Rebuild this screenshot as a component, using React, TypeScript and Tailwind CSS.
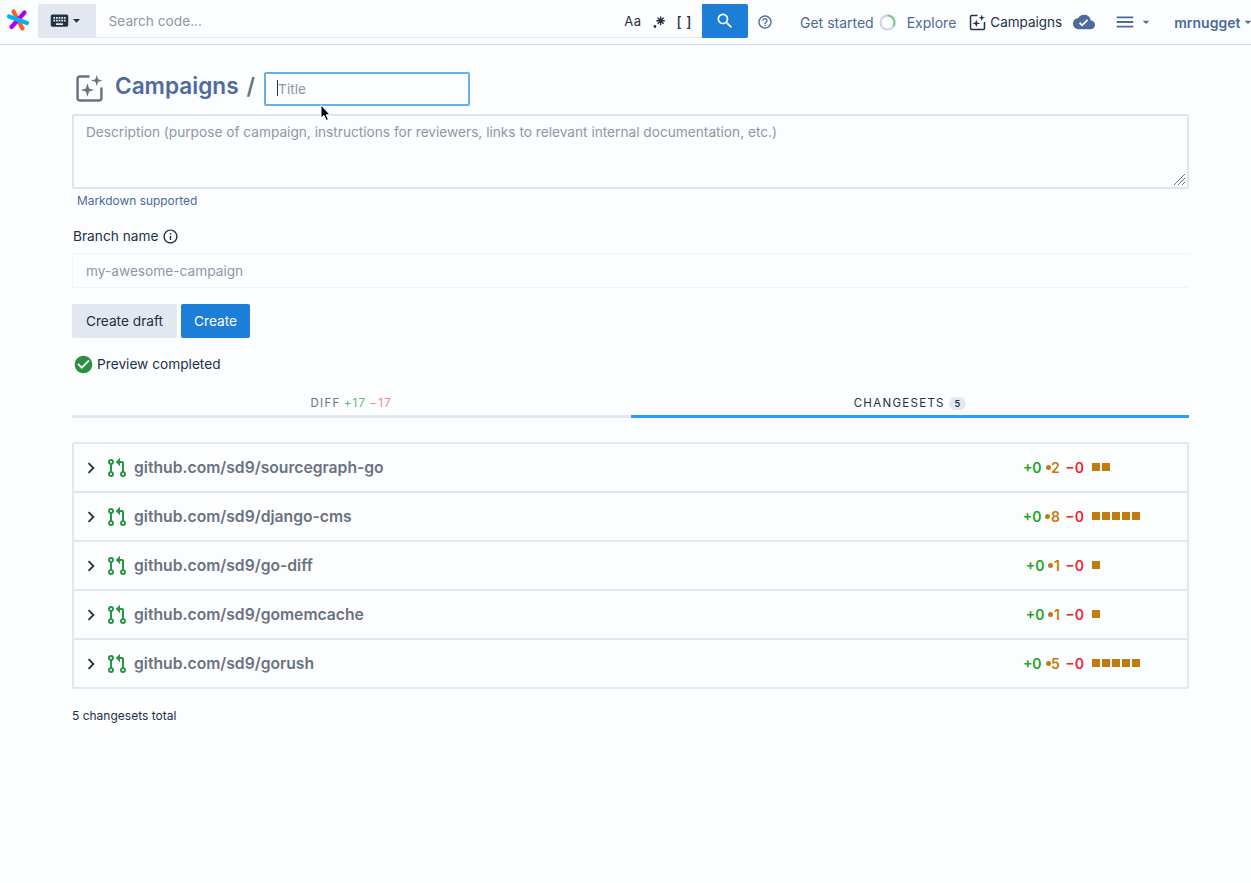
import React from 'react';
import { MdKeyboard, MdSearch, MdHelpOutline, MdCloudDone, MdMenu, MdArrowDropDown, MdCheckCircle, MdChevronRight, MdInfoOutline } from 'react-icons/md';

const changesets = [
  { name: 'github.com/sd9/sourcegraph-go', changed: 2, boxes: 2 },
  { name: 'github.com/sd9/django-cms', changed: 8, boxes: 5 },
  { name: 'github.com/sd9/go-diff', changed: 1, boxes: 1 },
  { name: 'github.com/sd9/gomemcache', changed: 1, boxes: 1 },
  { name: 'github.com/sd9/gorush', changed: 5, boxes: 5 },
];

const Logo = () => (
  <svg width="24" height="24" viewBox="0 0 24 24" fill="none" strokeLinecap="round" strokeWidth="4.2">
    <path d="M7.5 3.5 L16.5 20.5" stroke="#ff5c28" />
    <path d="M18.5 4.5 L5.5 19" stroke="#b200f8" />
    <path d="M3 8.5 L21 15" stroke="#00b4f2" />
  </svg>
);

const CampaignIcon = ({ size, color }: { size: number; color: string }) => (
  <svg width={size} height={size} viewBox="0 0 28 28" fill="none">
    <path d="M14 2.5 H4.5 A2 2 0 0 0 2.5 4.5 V23.5 A2 2 0 0 0 4.5 25.5 H23.5 A2 2 0 0 0 25.5 23.5 V13" stroke={color} strokeWidth="2.4" />
    <path d="M12 9 L13.6 14 L18.5 15.5 L13.6 17 L12 22 L10.4 17 L5.5 15.5 L10.4 14 Z" fill={color} />
    <path d="M21 1 L22.3 5 L26.5 6.3 L22.3 7.6 L21 11.5 L19.7 7.6 L15.5 6.3 L19.7 5 Z" fill={color} />
  </svg>
);

const PullIcon = () => (
  <svg width="24" height="24" viewBox="0 0 24 24" fill="#2a9444">
    <path d="M6,3A3,3 0 0,1 9,6C9,7.31 8.17,8.42 7,8.83V15.17C8.17,15.58 9,16.69 9,18A3,3 0 0,1 6,21A3,3 0 0,1 3,18C3,16.69 3.83,15.58 5,15.17V8.83C3.83,8.42 3,7.31 3,6A3,3 0 0,1 6,3M6,5A1,1 0 0,0 5,6A1,1 0 0,0 6,7A1,1 0 0,0 7,6A1,1 0 0,0 6,5M6,17A1,1 0 0,0 5,18A1,1 0 0,0 6,19A1,1 0 0,0 7,18A1,1 0 0,0 6,17M21,18A3,3 0 0,1 18,21A3,3 0 0,1 15,18C15,16.69 15.83,15.58 17,15.17V7H15V10.25L10.75,6L15,1.75V5H17A2,2 0 0,1 19,7V15.17C20.17,15.58 21,16.69 21,18M18,17A1,1 0 0,0 17,18A1,1 0 0,0 18,19A1,1 0 0,0 19,18A1,1 0 0,0 18,17Z" />
  </svg>
);

const RegexIcon = () => (
  <svg width="17" height="17" viewBox="0 0 24 24" fill="#243044">
    <path d="M16,16.92C15.67,16.97 15.34,17 15,17C14.66,17 14.33,16.97 14,16.92V13.41L11.5,15.89C11,15.5 10.5,15 10.11,14.5L12.59,12H9.08C9.03,11.67 9,11.34 9,11C9,10.66 9.03,10.33 9.08,10H12.59L10.11,7.5C10.3,7.25 10.5,7 10.76,6.76V6.76C11,6.5 11.25,6.3 11.5,6.11L14,8.59V5.08C14.33,5.03 14.66,5 15,5C15.34,5 15.67,5.03 16,5.08V8.59L18.5,6.11C19,6.5 19.5,7 19.89,7.5L17.41,10H20.92C20.97,10.33 21,10.66 21,11C21,11.34 20.97,11.67 20.92,12H17.41L19.89,14.5C19.7,14.75 19.5,15 19.24,15.24V15.24C19,15.5 18.75,15.7 18.5,15.89L16,13.41V16.92H16V16.92M5,19A2,2 0 0,1 7,17A2,2 0 0,1 9,19A2,2 0 0,1 7,21A2,2 0 0,1 5,19H5Z" />
  </svg>
);

const Progress = () => (
  <svg width="17" height="17" viewBox="0 0 17 17" fill="none" strokeWidth="2">
    <circle cx="8.5" cy="8.5" r="7" stroke="#cbd4e4" />
    <path d="M8.5 1.5 A7 7 0 0 1 14.5 12" stroke="#6fd08c" />
  </svg>
);

const Navbar = () => (
  <div className="flex h-[45px] items-start border-b border-[#cdd7e8] pt-1">
    <div className="ml-[6px] mr-2 mt-1 shrink-0">
      <Logo />
    </div>
    <div className="flex h-[34px] w-[710px] shrink-0 items-start border-b border-[#e4e9f1]">
      <div className="flex h-[33px] w-[58px] items-center justify-center rounded-l-[2px] bg-[#e3e7ef] text-[#243044]">
        <MdKeyboard size={21} />
        <MdArrowDropDown size={17} className="-ml-[2px]" />
      </div>
      <div className="flex h-[33px] flex-1 items-center pl-[12.5px] pt-[1px] text-[13.7px] text-[#8f97a5]">Search code...</div>
      <div className="flex h-[33px] items-center pr-[10px] pt-[2px] text-[#243044]">
        <span className="text-[13px] tracking-[0.5px]">Aa</span>
        <span className="ml-[9px] flex"><RegexIcon /></span>
        <span className="ml-[9px] text-[14px] font-medium tracking-[0.5px]">[ ]</span>
      </div>
      <div className="flex h-[34px] w-[46px] items-center justify-center rounded-r-[2px] bg-[#1c7ed6] text-white">
        <MdSearch size={20} />
      </div>
    </div>
    <div className="flex h-[36px] shrink-0 items-center whitespace-nowrap text-[14px] text-[#4b6a9c]">
      <MdHelpOutline size={16} className="ml-[9px] shrink-0 text-[#4b6a9c]" />
      <span className="ml-[27px]">Get started</span>
      <span className="ml-[5px] flex"><Progress /></span>
      <span className="ml-[11px]">Explore</span>
      <span className="ml-[13px] flex"><CampaignIcon size={17} color="#243044" /></span>
      <span className="ml-[4px] text-[13.5px] text-[#243044]">Campaigns</span>
      <MdCloudDone size={22} className="ml-[11px] shrink-0 text-[#4f6a9e]" />
      <MdMenu size={22} className="ml-[19px] shrink-0 text-[#4b6a9c]" />
      <MdArrowDropDown size={16} className="ml-[2px] shrink-0 text-[#4b6a9c]" />
      <span className="ml-[20px] font-semibold">mrnugget</span>
      <MdArrowDropDown size={16} className="shrink-0 text-[#4b6a9c]" />
    </div>
  </div>
);

const Stats = ({ changed, boxes }: { changed: number; boxes: number }) => (
  <div className="flex w-[118px] items-center text-[14px] font-semibold">
    <div className="flex w-[62px] shrink-0 items-center justify-end">
      <span className="text-[#1fa51f]">+0</span>
      <span className="ml-[4px] h-[5px] w-[5px] rounded-full bg-[#c27c0e]" />
      <span className="ml-[0.5px] text-[#c27c0e]">{changed}</span>
      <span className="ml-[5.5px] text-[#f2242d]">−0</span>
    </div>
    <div className="ml-[8px] flex -translate-y-px gap-[2px]">
      {Array.from({ length: boxes }).map((_, i) => (
        <span key={i} className="h-[8px] w-[8px] bg-[#c27c0e]" />
      ))}
    </div>
  </div>
);

const App = () => (
  <div className="relative min-h-[883px] overflow-hidden bg-[#fbfdff] font-['Inter',sans-serif] text-[#243044]">
    <Navbar />
    <div className="ml-[72px] w-[1117px] pt-[27px]">
      <div className="flex h-[33px] items-center">
        <span className="ml-[3px] flex"><CampaignIcon size={29} color="#6b7280" /></span>
        <span className="mb-[6px] ml-[11px] text-[22.6px] font-semibold text-[#4f6a9e]">Campaigns</span>
        <span className="mb-[6px] ml-[8px] text-[22.6px] font-semibold text-[#6b7280]">/</span>
        <div className="relative ml-[9px] h-[34px] w-[206px] rounded-[2px] border-2 border-[#6aaeea] pl-[12px] pt-[5px] text-[13.7px] text-[#8f97a5]">
          Title
          <span className="absolute left-[11px] top-[6px] h-[16px] w-px bg-[#243044]" />
        </div>
      </div>
      <div className="relative mt-[9px] h-[75px] rounded-[2px] border-2 border-[#dfe5ef] px-[12px] pt-[6px] text-[13.68px] text-[#8f97a5]">
        Description (purpose of campaign, instructions for reviewers, links to relevant internal documentation, etc.)
        <svg className="absolute bottom-[1px] right-[1px]" width="13" height="13" viewBox="0 0 13 13" stroke="#6b7280" strokeWidth="1">
          <path d="M1 12 L12 1 M5 12 L12 5 M9 12 L12 9" />
        </svg>
      </div>
      <div className="mt-[4px] pl-[5px] text-[11.9px] leading-[16px] text-[#4b6a9c]">Markdown supported</div>
      <div className="mt-[17px] flex h-[20px] items-center pl-px text-[13.7px]">
        <span>Branch name</span>
        <MdInfoOutline size={17} className="ml-[4px]" />
      </div>
      <div className="mt-[7px] flex h-[35px] items-center rounded-[3px] border border-[#f0f3f8] border-r-0 pl-[13px] pt-px text-[13.7px] text-[#8f97a5]">
        my-awesome-campaign
      </div>
      <div className="mt-[16px] flex gap-[4px] text-[13.7px]">
        <div className="flex h-[34px] w-[105px] items-center justify-center rounded-[2px] bg-[#e3e7ef]">Create draft</div>
        <div className="flex h-[34px] w-[69px] items-center justify-center rounded-[2px] bg-[#1c7ed6] text-white">Create</div>
      </div>
      <div className="mt-[16px] flex h-[20px] items-center pl-px text-[13.7px]">
        <MdCheckCircle size={21} className="text-[#2a8f3f]" />
        <span className="ml-[3px]">Preview completed</span>
      </div>
      <div className="mt-[21px] flex text-[11.5px] uppercase tracking-[1.3px]">
        <div className="flex h-[23px] w-1/2 items-start justify-center border-b-[3px] border-[#e3e7ef] text-[#6b7280]">
          <span>Diff</span>
          <span className="ml-[3px] text-[#6cb27c]">+17</span>
          <span className="ml-[3px] text-[#ee8a8a]">−17</span>
        </div>
        <div className="flex h-[23px] w-1/2 items-start justify-center border-b-[3px] border-[#329af0]">
          <span>Changesets</span>
          <span className="ml-[4px] mt-[2px] flex h-[13px] w-[17px] items-center justify-center rounded-full bg-[#e3e7ef] text-[9px] font-semibold tracking-normal">5</span>
        </div>
      </div>
      <div className="mt-[24px] rounded-[2px] border-2 border-[#e3e7ef]">
        {changesets.map((c, i) => (
          <div key={c.name} className={`flex items-center ${i > 0 ? 'h-[49px] border-t-2 border-[#e3e7ef]' : 'h-[47px]'}`}>
            <MdChevronRight size={22} className="ml-[6px] shrink-0" />
            <span className="ml-[3px] flex"><PullIcon /></span>
            <span className="ml-[5px] flex-1 text-[15.7px] font-semibold text-[#6b7280]">{c.name}</span>
            <div className="mr-[47px] flex">
              <Stats changed={c.changed} boxes={c.boxes} />
            </div>
          </div>
        ))}
      </div>
      <div className="mt-[19px] text-[12px] leading-[16px]">5 changesets total</div>
    </div>
    <svg className="absolute left-[320px] top-[104px]" width="12" height="18" viewBox="0 0 12 18">
      <path d="M1 1 V14 L4 11.5 L6.2 16.5 L8.4 15.5 L6.2 10.8 H10 Z" fill="#000" stroke="#fff" strokeWidth="1" />
    </svg>
  </div>
);

export default App;
